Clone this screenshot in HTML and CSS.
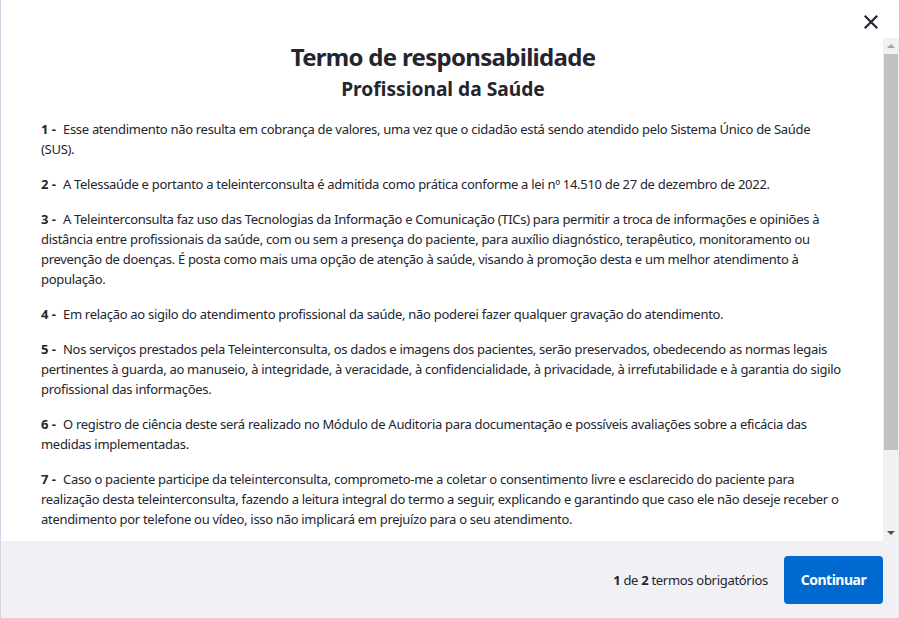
FILE: index.html
```html
<!DOCTYPE html>
<html lang="pt-BR">
<head>
<meta charset="utf-8">
<title>Termo de responsabilidade</title>
<link rel="stylesheet" href="styles.css">
</head>
<body>
<div class="modal">
  <div class="modal-header">
    <button class="close" aria-label="Fechar">
      <svg width="14" height="14" viewBox="0 0 14 14"><path d="M1.5 1.5 L12.5 12.5 M12.5 1.5 L1.5 12.5" stroke="#24252e" stroke-width="2.2" stroke-linecap="square"/></svg>
    </button>
  </div>
  <div class="modal-body">
    <div class="content">
      <h1 class="title">Termo de responsabilidade</h1>
      <h2 class="subtitle">Profissional da Saúde</h2>
      <p><b class="num">1 -</b>Esse atendimento não resulta em cobrança de valores, uma vez que o cidadão está sendo atendido pelo Sistema Único de Saúde (SUS).</p>
      <p><b class="num">2 -</b>A Telessaúde e portanto a teleinterconsulta é admitida como prática conforme a lei nº 14.510 de 27 de dezembro de 2022.</p>
      <p><b class="num">3 -</b>A Teleinterconsulta faz uso das Tecnologias da Informação e Comunicação (TICs) para permitir a troca de informações e opiniões à distância entre profissionais da saúde, com ou sem a presença do paciente, para auxílio diagnóstico, terapêutico, monitoramento ou prevenção de doenças. É posta como mais uma opção de atenção à saúde, visando à promoção desta e um melhor atendimento à população.</p>
      <p><b class="num">4 -</b>Em relação ao sigilo do atendimento profissional da saúde, não poderei fazer qualquer gravação do atendimento.</p>
      <p><b class="num">5 -</b>Nos serviços prestados pela Teleinterconsulta, os dados e imagens dos pacientes, serão preservados, obedecendo as normas legais pertinentes à guarda, ao manuseio, à integridade, à veracidade, à confidencialidade, à privacidade, à irrefutabilidade e à garantia do sigilo profissional das informações.</p>
      <p><b class="num">6 -</b>O registro de ciência deste será realizado no Módulo de Auditoria para documentação e possíveis avaliações sobre a eficácia das medidas implementadas.</p>
      <p><b class="num">7 -</b>Caso o paciente participe da teleinterconsulta, comprometo-me a coletar o consentimento livre e esclarecido do paciente para realização desta teleinterconsulta, fazendo a leitura integral do termo a seguir, explicando e garantindo que caso ele não deseje receber o atendimento por telefone ou vídeo, isso não implicará em prejuízo para o seu atendimento.</p>
    </div>
    <div class="scrollbar" aria-hidden="true">
      <div class="arrow up"></div>
      <div class="thumb"></div>
      <div class="track-rest"></div>
      <div class="arrow down"></div>
    </div>
  </div>
  <div class="modal-footer">
    <span class="progress"><b>1</b> de <b>2</b> termos obrigatórios</span>
    <button class="btn-primary">Continuar</button>
  </div>
</div>
</body>
</html>
```
FILE: styles.css
```css
* { box-sizing: border-box; }
html, body { margin: 0; padding: 0; }
body {
  width: 900px;
  height: 618px;
  background: #ffffff;
  font-family: "Noto Sans", "Open Sans", sans-serif;
  color: #24252e;
  overflow: hidden;
}
.modal {
  width: 900px;
  height: 618px;
  display: flex;
  flex-direction: column;
  border-left: 1px solid #d3d3e3;
  border-right: 1px solid #c9c9d9;
  background: #fff;
}
.modal-header {
  height: 38px;
  display: flex;
  justify-content: flex-end;
  align-items: flex-start;
  padding: 15px 21px 0 0;
}
.close {
  border: 0;
  background: transparent;
  padding: 0;
  width: 14px;
  height: 14px;
  display: flex;
  cursor: pointer;
}
.modal-body {
  flex: 1;
  display: flex;
  min-height: 0;
}
.content {
  flex: 1;
  overflow: hidden;
  padding: 0 38px 0 40px;
}
.title {
  margin: 3px 0 0;
  text-align: center;
  font-size: 24px;
  line-height: 32px;
  font-weight: 700;
  letter-spacing: -0.7px;
}
.subtitle {
  margin: 0 0 14px;
  text-align: center;
  font-size: 19.2px;
  line-height: 32px;
  font-weight: 700;
}
.content p {
  margin: 0 0 15px;
  font-size: 13px;
  line-height: 20px;
  letter-spacing: -0.3px;
}
.num {
  display: inline-block;
  font-weight: 700;
  margin-right: 7px;
  letter-spacing: 0;
}
.scrollbar {
  width: 16px;
  background: #f1f1f1;
  display: flex;
  flex-direction: column;
  align-items: center;
}
.arrow {
  width: 16px;
  height: 16px;
  display: flex;
  align-items: center;
  justify-content: center;
}
.arrow::before {
  content: "";
  width: 0;
  height: 0;
  border-left: 4px solid transparent;
  border-right: 4px solid transparent;
}
.arrow.up::before { border-bottom: 4px solid #a3a3a3; }
.arrow.down::before { border-top: 4px solid #505050; }
.thumb {
  width: 14px;
  height: 396px;
  background: #c1c1c1;
}
.track-rest { flex: 1; }
.modal-footer {
  height: 77px;
  background: #f0f0f5;
  display: flex;
  align-items: center;
  justify-content: flex-end;
  gap: 16px;
  padding: 0 16px 0 0;
}
.progress {
  font-size: 13px;
  letter-spacing: -0.3px;
  color: #24252e;
}
.progress b { font-weight: 700; }
.btn-primary {
  border: 0;
  border-radius: 4px;
  background: #0069d0;
  color: #fff;
  font-family: inherit;
  font-size: 14px;
  font-weight: 700;
  letter-spacing: -0.5px;
  width: 99px;
  height: 48px;
  padding: 0;
}
```
